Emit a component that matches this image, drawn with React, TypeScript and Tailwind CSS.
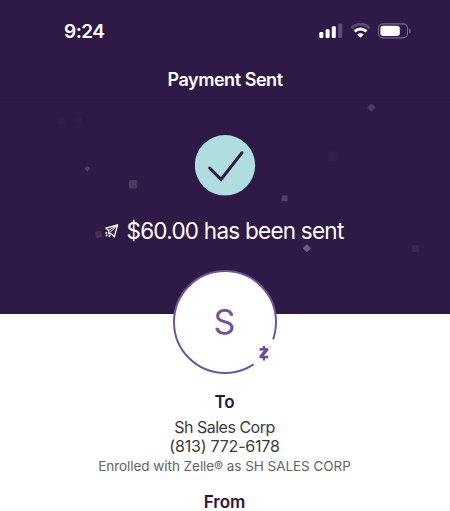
import type { ReactNode } from 'react';

const font = "font-['Inter','Liberation_Sans',sans-serif]";

function StatusIcons() {
  return (
    <svg width="93" height="16" viewBox="0 0 93 16" fill="none">
      <rect x="0.3" y="9" width="4" height="6" rx="1.2" fill="#fff" />
      <rect x="6.6" y="6.2" width="4" height="8.8" rx="1.2" fill="#fff" />
      <rect x="12.8" y="3.2" width="4" height="11.8" rx="1.2" fill="#fff" />
      <rect x="19.2" y="0.4" width="4" height="14.6" rx="1.2" fill="#614a74" />
      <path d="M32.4 5.1 C37.6 -0.2 45.4 -0.2 50.6 5.1" stroke="#614a74" strokeWidth="2.8" />
      <path d="M35.6 8.4 C39 5.1 44 5.1 47.4 8.4" stroke="#fff" strokeWidth="2.9" />
      <path d="M38.3 11.4 C40.2 9.8 42.8 9.8 44.7 11.4 L41.5 14.7 Z" fill="#fff" />
      <rect x="59.5" y="0.9" width="29" height="14" rx="4.4" stroke="#79678a" strokeWidth="1.1" />
      <rect x="61.4" y="2.8" width="19.4" height="10.2" rx="2.7" fill="#fff" />
      <path d="M90.2 5.6 Q91.9 6.3 91.9 7.9 Q91.9 9.5 90.2 10.2 Z" fill="#79678a" />
    </svg>
  );
}

// faint squares scattered behind the success message
function Confetti() {
  return (
    <svg className="absolute inset-0" width="450" height="210" viewBox="0 104 450 210">
      <rect x="256" y="103" width="10" height="1.2" fill="#3a244e" />
      <rect x="-3.1" y="-3.1" width="6.2" height="6.2" rx="0.6" fill="#454066" transform="translate(371.4 107.7) rotate(45)" />
      <rect x="-2.1" y="-2.1" width="4.2" height="4.2" rx="0.6" fill="#533f67" transform="translate(87.4 168.6) rotate(40)" />
      <rect x="129" y="180" width="8.4" height="8.4" rx="1.4" fill="#4d3861" />
      <rect x="281.6" y="195.6" width="6" height="5.6" rx="0.6" fill="#563d67" />
      <rect x="328.5" y="151.5" width="9.5" height="9.5" rx="1.2" fill="#351e4b" />
      <rect x="56.5" y="117.5" width="8.5" height="6.5" rx="1.2" fill="#331c49" />
      <rect x="75.5" y="117.5" width="6" height="6" rx="1" fill="#341d4a" />
      <rect x="-3.2" y="-3.2" width="6.4" height="6.4" rx="0.5" fill="#403258" transform="translate(98.6 234.5) rotate(-14)" />
      <rect x="-2" y="-2" width="4" height="4" rx="0.5" fill="#382350" transform="translate(200.5 220.5) rotate(45)" />
      <rect x="180.5" y="231" width="5" height="5" rx="0.6" fill="#4b365f" />
      <rect x="232" y="231.5" width="5" height="5" rx="0.6" fill="#453458" />
      <rect x="-2.9" y="-2.9" width="5.8" height="5.8" rx="0.5" fill="#6f5b85" transform="translate(306.9 248.3) rotate(45)" />
      <rect x="412" y="245.2" width="7" height="6.8" rx="0.8" fill="#3c2551" />
    </svg>
  );
}

function SuccessMark() {
  return (
    <svg width="61" height="61" viewBox="0 0 61 61" fill="none">
      <circle cx="30" cy="30.3" r="30.2" fill="#afdde0" />
      <path d="M14.6 33 L26 44.4 L47 17.8" stroke="#2b1c46" strokeWidth="3" strokeLinecap="round" />
    </svg>
  );
}

function SendIcon() {
  return (
    <svg className="shrink-0" width="15" height="15" viewBox="0 0 15 15" fill="none" stroke="#fff" strokeWidth="1.3" strokeLinejoin="round" strokeLinecap="round">
      <path d="M13.6 1 L1.8 4.1 L4.6 6.4 L4.9 9.6 L7.9 10.1 L10.3 12.9 Z" />
      <path d="M13.6 1 L4.6 6.4 M13.6 1 L4.9 9.6" strokeWidth="1" />
      <path d="M2.7 8.4 L1.6 9.6 M3 11 L1.3 12.9 M5.9 11.5 L4.7 12.9" strokeDasharray="1.1 1.5" strokeWidth="1.4" />
    </svg>
  );
}

function ZelleMark() {
  return (
    <svg width="14" height="17" viewBox="0 0 14 17" fill="#6c4a96">
      <rect x="1.6" y="3.1" width="8.6" height="2.5" />
      <rect x="1.6" y="10.8" width="8.6" height="2.5" />
      <path d="M6.6 4.6 H10.2 V5.6 L5.2 11.8 H1.6 V10.8 Z" />
      <rect x="4.8" y="1" width="2.3" height="3" />
      <rect x="4.8" y="12.5" width="2.3" height="3" />
      <circle cx="12" cy="2.1" r="0.7" fill="#8a8490" />
    </svg>
  );
}

function Avatar({ children }: { children: ReactNode }) {
  return (
    <div className="relative z-10 -mt-11 flex h-26 w-26 shrink-0 items-center justify-center rounded-full border-2 border-[#71539a] bg-white">
      <span className="text-[34px] leading-none text-[#71539a]">{children}</span>
      <div className="absolute top-[65px] left-[74px] flex h-8 w-8 items-center justify-center rounded-full bg-white">
        <ZelleMark />
      </div>
    </div>
  );
}

export default function App() {
  return (
    <div className={`${font} h-[511px] w-[450px] overflow-hidden bg-white`}>
      <header className="h-[104px] border-b border-[#2a163f] bg-[#2f1946] text-white">
        <div className="flex h-[61px] items-center justify-between pr-[38px] pl-[64px]">
          <span className="pt-[3px] text-[19px] font-semibold tracking-[-0.5px]">9:24</span>
          <StatusIcons />
        </div>
        <h1 className="pt-px text-center text-[18px] leading-9 font-semibold tracking-[-0.45px]">Payment Sent</h1>
      </header>

      <section className="relative flex h-[210px] flex-col items-center bg-[#2f1946] pt-[31px]">
        <Confetti />
        <div className="relative">
          <SuccessMark />
        </div>
        <div className="relative mt-[21px] flex items-center gap-[7px] pr-0.5 text-white">
          <SendIcon />
          <p className="text-[22.5px] leading-7 tracking-[-0.75px] whitespace-nowrap">$60.00 has been sent</p>
        </div>
      </section>

      <main className="flex h-[197px] flex-col items-center border-r border-[#f1f1f3] text-center">
        <Avatar>S</Avatar>
        <h2 className="mt-4 text-[17px] leading-6 font-semibold text-[#2a1642]">To</h2>
        <p className="mt-1 text-[16px] leading-[19px] tracking-[-0.5px] text-[#3a3a3c]">Sh Sales Corp</p>
        <p className="text-[16px] leading-[19px] tracking-[-0.2px] text-[#3a3a3c]">(813) 772-6178</p>
        <p className="mt-px text-[13.5px] leading-[19px] tracking-[-0.04px] whitespace-nowrap text-[#646466]">Enrolled with Zelle® as SH SALES CORP</p>
        <h2 className="mt-3.5 text-[17px] leading-6 font-semibold text-[#2a1642]">From</h2>
      </main>
    </div>
  );
}
